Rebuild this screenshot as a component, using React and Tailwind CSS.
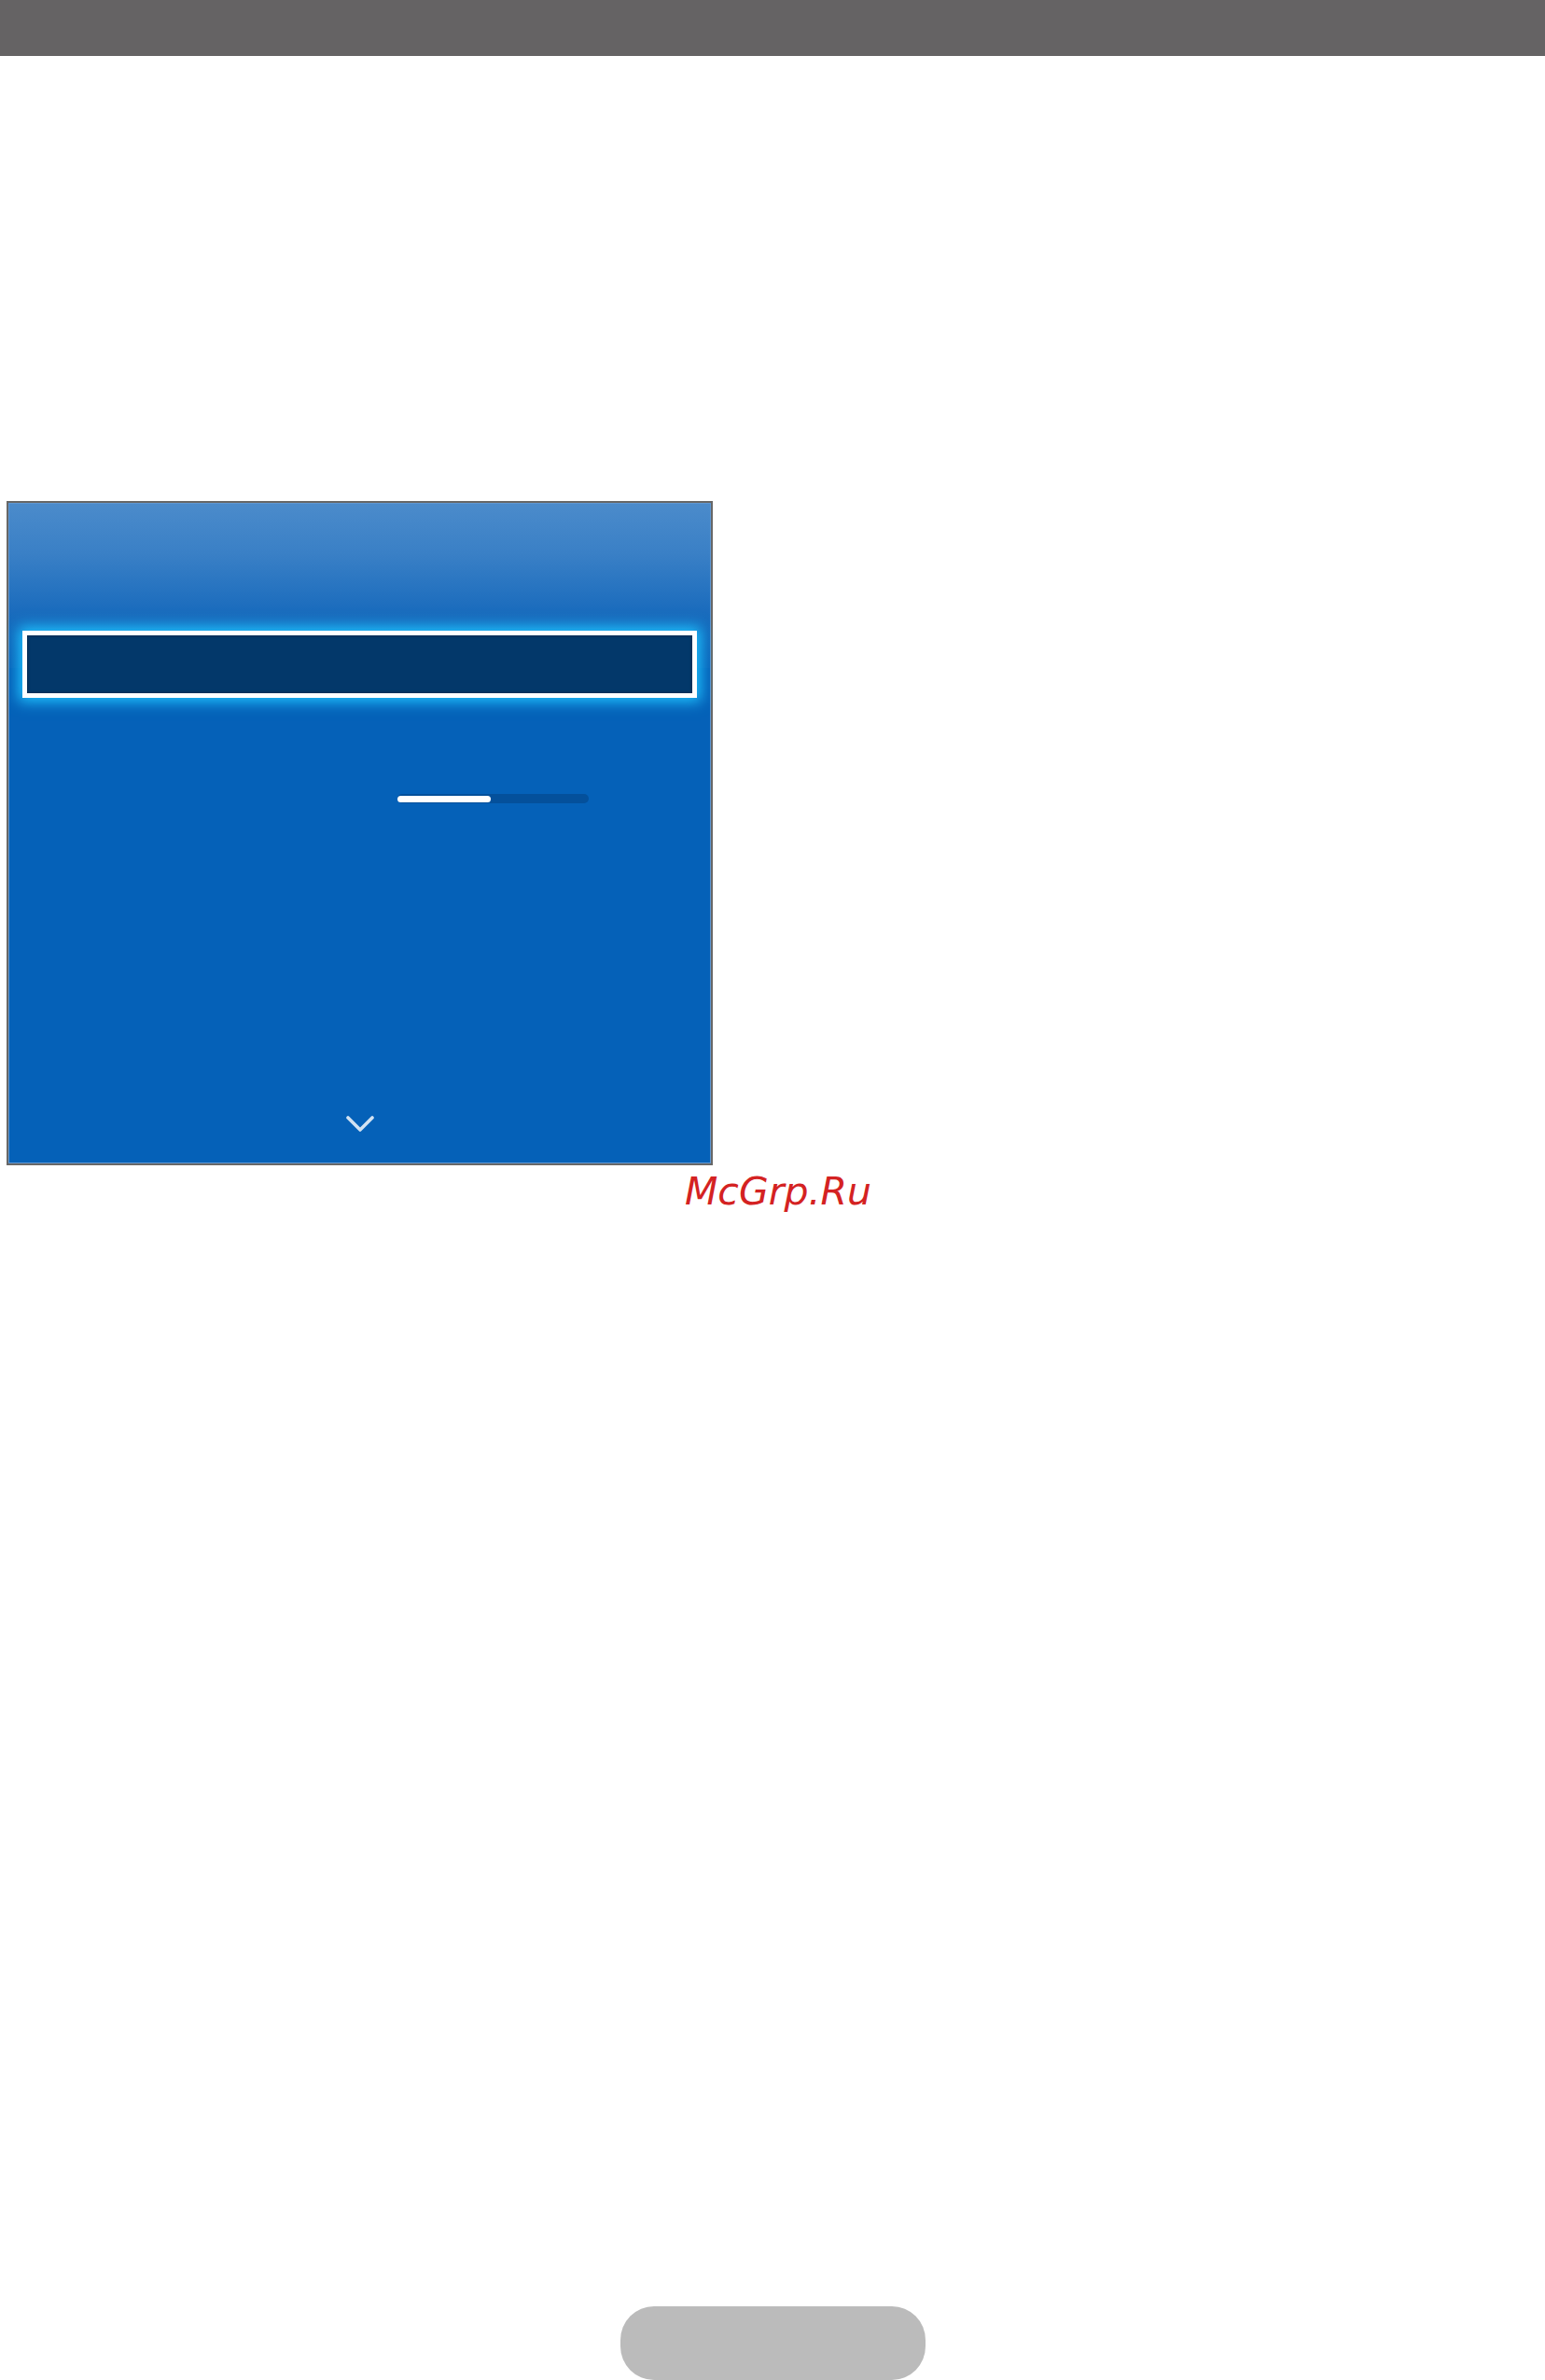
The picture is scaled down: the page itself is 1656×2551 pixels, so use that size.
import React from "react";

const SettingsPanel = () => {
  return (
    <div className="ml-[7px] mt-[477px] h-[712px] w-[757px] border-2 border-[#676767] bg-[#0561b8]">
      <div className="flex h-full flex-col border border-[#5f97d2]">
        {/* header gradient with the focused row */}
        <div className="h-[176px] bg-[linear-gradient(to_bottom,#4b8bcb_0%,#3a80c6_30%,#1b6cbd_65%,#1168bb_80%,#0a63b9_100%)] pt-[136px]">
          <div className="mx-[14px] h-[72px] border-[5px] border-white bg-[#03386a] shadow-[0_0_14px_4px_#20c4ff,inset_0_0_3px_1px_#0c2d52]" />
        </div>

        <div className="ml-[416px] mt-[135px] flex h-[10px] w-[205px] items-center rounded-full bg-[#04509b]">
          <div className="h-[7px] w-[100px] rounded-full bg-white" />
        </div>

        <div className="mt-auto mb-[32px] flex justify-center">
          <svg width="30" height="18" viewBox="0 0 30 18" fill="none">
            <path
              d="M2 2 L15 15 L28 2"
              stroke="#d2e2f2"
              strokeWidth="3.6"
              strokeLinecap="round"
              strokeLinejoin="round"
            />
          </svg>
        </div>
      </div>
    </div>
  );
};

const App = () => {
  return (
    <div className="flex h-[2551px] w-[1656px] flex-col overflow-hidden bg-white">
      <div className="h-[60px] w-full shrink-0 bg-[#656364]" />

      <SettingsPanel />

      <div
        className="ml-[734px] mt-[8px] text-[41px] italic leading-none text-[#d42222]"
        style={{ fontFamily: '"DejaVu Sans", sans-serif' }}
      >
        McGrp.Ru
      </div>

      <div className="mx-auto mt-auto h-[79px] w-[327px] shrink-0 rounded-[36px] bg-[#bbbbbb]" />
    </div>
  );
};

export default App;
